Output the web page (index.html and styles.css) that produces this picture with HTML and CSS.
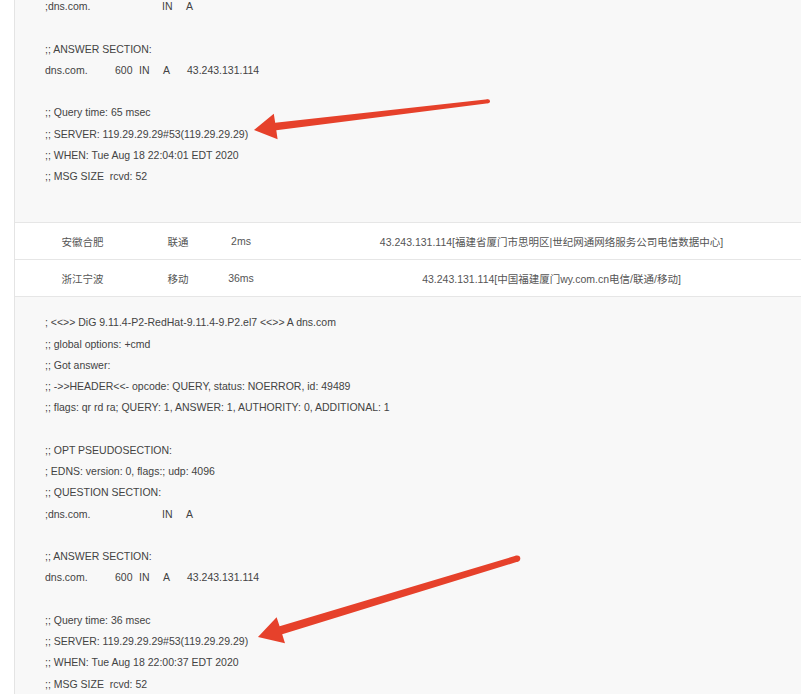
FILE: index.html
```html
<!DOCTYPE html>
<html lang="zh-CN">
<head>
<meta charset="utf-8">
<title>dig</title>
<link rel="stylesheet" href="styles.css">
</head>
<body>
<div class="page">
  <div class="panel">
    <div class="dig first">
      <div class="ln"><span class="c c-name">;dns.com.</span><span class="c c-in">IN</span><span class="c">A</span></div>
      <div class="ln"></div>
      <div class="ln">;; ANSWER SECTION:</div>
      <div class="ln"><span class="c c-ttlname">dns.com.</span><span class="c c-ttl">600</span><span class="c c-in">IN</span><span class="c c-a">A</span><span class="c">43.243.131.114</span></div>
      <div class="ln"></div>
      <div class="ln">;; Query time: 65 msec</div>
      <div class="ln">;; SERVER: 119.29.29.29#53(119.29.29.29)</div>
      <div class="ln">;; WHEN: Tue Aug 18 22:04:01 EDT 2020</div>
      <div class="ln">;; MSG SIZE  rcvd: 52</div>
    </div>
    <div class="row">
      <div class="cell">安徽合肥</div>
      <div class="cell">联通</div>
      <div class="cell">2ms</div>
      <div class="cell">43.243.131.114[福建省厦门市思明区|世纪网通网络服务公司电信数据中心]</div>
    </div>
    <div class="row">
      <div class="cell">浙江宁波</div>
      <div class="cell">移动</div>
      <div class="cell">36ms</div>
      <div class="cell">43.243.131.114[中国福建厦门wy.com.cn电信/联通/移动]</div>
    </div>
    <div class="dig">
      <div class="ln">; &lt;&lt;&gt;&gt; DiG 9.11.4-P2-RedHat-9.11.4-9.P2.el7 &lt;&lt;&gt;&gt; A dns.com</div>
      <div class="ln">;; global options: +cmd</div>
      <div class="ln">;; Got answer:</div>
      <div class="ln">;; -&gt;&gt;HEADER&lt;&lt;- opcode: QUERY, status: NOERROR, id: 49489</div>
      <div class="ln">;; flags: qr rd ra; QUERY: 1, ANSWER: 1, AUTHORITY: 0, ADDITIONAL: 1</div>
      <div class="ln"></div>
      <div class="ln">;; OPT PSEUDOSECTION:</div>
      <div class="ln">; EDNS: version: 0, flags:; udp: 4096</div>
      <div class="ln">;; QUESTION SECTION:</div>
      <div class="ln"><span class="c c-name">;dns.com.</span><span class="c c-in">IN</span><span class="c">A</span></div>
      <div class="ln"></div>
      <div class="ln">;; ANSWER SECTION:</div>
      <div class="ln"><span class="c c-ttlname">dns.com.</span><span class="c c-ttl">600</span><span class="c c-in">IN</span><span class="c c-a">A</span><span class="c">43.243.131.114</span></div>
      <div class="ln"></div>
      <div class="ln">;; Query time: 36 msec</div>
      <div class="ln">;; SERVER: 119.29.29.29#53(119.29.29.29)</div>
      <div class="ln">;; WHEN: Tue Aug 18 22:00:37 EDT 2020</div>
      <div class="ln">;; MSG SIZE  rcvd: 52</div>
      <div class="ln"></div>
    </div>
  </div>
  <svg class="arrows" width="801" height="694" viewBox="0 0 801 694" aria-hidden="true">
    <polygon class="arrow" points="254,130 273.8,113.8 275.2,122.8 487.75,99.2 488.25,103.2 276.3,130.2 277.6,139.2"/>
    <circle class="arrow" cx="488" cy="101.2" r="2"/>
    <polygon class="arrow" points="258,637 276.6,617.2 279.6,626.2 516.4,555.6 518.1,561.6 282.2,634.3 285,643.2"/>
    <circle class="arrow" cx="517.2" cy="558.6" r="3.1"/>
  </svg>
</div>
</body>
</html>
```
FILE: styles.css
```css
html, body {
  margin: 0;
  padding: 0;
  overflow: hidden;
  background: #ffffff;
}

body {
  width: 801px;
  height: 694px;
  font-family: "Liberation Sans", Arial, "Noto Sans CJK SC", sans-serif;
  font-size: 10.5px;
}

.page {
  position: relative;
  width: 801px;
  height: 694px;
  overflow: hidden;
}

.panel {
  margin-left: 14px;
  border-left: 1px solid #e4e4e4;
  background: #f8f8f8;
  height: 694px;
  overflow: hidden;
}

.dig {
  padding: 15px 0 35px 30px;
  color: #434343;
  background: #f8f8f8;
  border-bottom: 1px solid #e6e6e6;
}

.dig.first {
  margin-top: -19px;
}

.ln {
  height: 21.25px;
  line-height: 21.25px;
  white-space: pre;
}

.c {
  display: inline-block;
}

.c-name { width: 117px; }
.c-in { width: 24px; }
.c-ttlname { width: 70px; }
.c-ttl { width: 24px; }
.c-a { width: 24px; }

.row {
  display: grid;
  grid-template-columns: 135px 56px 70px 551px;
  height: 36px;
  align-items: center;
  background: #ffffff;
  border-bottom: 1px solid #e6e6e6;
  color: #555555;
}

.cell {
  text-align: center;
  white-space: nowrap;
}

.arrows {
  position: absolute;
  left: 0;
  top: 0;
  pointer-events: none;
}

.arrow {
  fill: #e6412b;
}
```
